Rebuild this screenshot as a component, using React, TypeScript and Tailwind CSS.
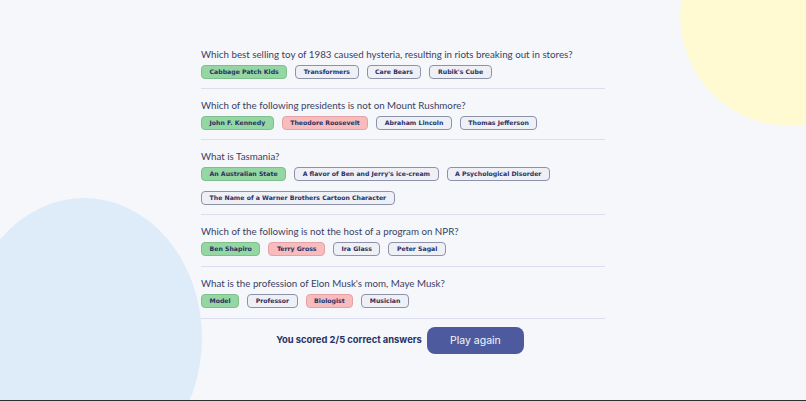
import React from "react";

type Q = {
  question: string;
  answers: string[];
  correct: string;
  picked: string;
};

const QUESTIONS: Q[] = [
  {
    question:
      "Which best selling toy of 1983 caused hysteria, resulting in riots breaking out in stores?",
    answers: ["Cabbage Patch Kids", "Transformers", "Care Bears", "Rubik's Cube"],
    correct: "Cabbage Patch Kids",
    picked: "Cabbage Patch Kids",
  },
  {
    question: "Which of the following presidents is not on Mount Rushmore?",
    answers: ["John F. Kennedy", "Theodore Roosevelt", "Abraham Lincoln", "Thomas Jefferson"],
    correct: "John F. Kennedy",
    picked: "Theodore Roosevelt",
  },
  {
    question: "What is Tasmania?",
    answers: [
      "An Australian State",
      "A flavor of Ben and Jerry's ice-cream",
      "A Psychological Disorder",
      "The Name of a Warner Brothers Cartoon Character",
    ],
    correct: "An Australian State",
    picked: "An Australian State",
  },
  {
    question: "Which of the following is not the host of a program on NPR?",
    answers: ["Ben Shapiro", "Terry Gross", "Ira Glass", "Peter Sagal"],
    correct: "Ben Shapiro",
    picked: "Terry Gross",
  },
  {
    question: "What is the profession of Elon Musk's mom, Maye Musk?",
    answers: ["Model", "Professor", "Biologist", "Musician"],
    correct: "Model",
    picked: "Biologist",
  },
];

function Answer({ label, state }: { label: string; state: "right" | "wrong" | "idle" }) {
  const look =
    state === "right"
      ? "bg-[#94d7a2] border-[#7fbf8d]"
      : state === "wrong"
        ? "bg-[#f8bcbc] border-[#e3a3a6]"
        : "bg-[#eef0f5] border-[#8d92ab]";
  return (
    <span
      className={`inline-flex items-center h-[14px] px-[7.5px] rounded-[4px] border text-[6.2px] font-bold leading-none text-[#293264] font-['DejaVu_Sans',sans-serif] ${look}`}
    >
      {label}
    </span>
  );
}

export default function App() {
  const score = QUESTIONS.filter((q) => q.picked === q.correct).length;

  return (
    <div
      className="relative w-full h-[401px] overflow-hidden bg-[#f5f7fb] border-b border-[#2f2f33]"
      style={{ fontFamily: "Inter, 'Noto Sans', sans-serif" }}
    >
      {/* decorative blobs */}
      <div className="absolute left-[680px] top-[-60px] w-[200px] h-[186px] rounded-[48%_52%_45%_55%/40%_45%_55%_60%] bg-[#fffad1]" />
      <div className="absolute left-[-34px] top-[198px] w-[236px] h-[280px] rounded-[50%] bg-[#deebf8]" />

      <div className="relative w-[404px] mx-auto pt-[38px]">
        {QUESTIONS.map((q, i) => (
          <div
            key={q.question}
            className={`pt-[10px] border-b border-[#dbdef0] ${i > 2 ? "pb-[10px]" : "pb-[9px]"}`}
          >
            <p className="text-[9.75px] leading-[12px] text-[#3a3f63] font-['Lato',sans-serif]">
              {q.question}
            </p>
            <div className="mt-[5px] flex flex-wrap gap-x-[8px] gap-y-[10px]">
              {q.answers.map((a) => (
                <Answer
                  key={a}
                  label={a}
                  state={a === q.correct ? "right" : a === q.picked ? "wrong" : "idle"}
                />
              ))}
            </div>
          </div>
        ))}

        <div className="flex items-center justify-center gap-[5px] pt-[8px] pr-[6px]">
          <span className="text-[9.4px] font-bold text-[#293264]">
            You scored {score}/{QUESTIONS.length} correct answers
          </span>
          <button className="w-[97px] h-[27px] rounded-[8px] bg-[#4d5b9e] text-[#f5f7fb] text-[10.5px] font-normal">
            Play again
          </button>
        </div>
      </div>
    </div>
  );
}
